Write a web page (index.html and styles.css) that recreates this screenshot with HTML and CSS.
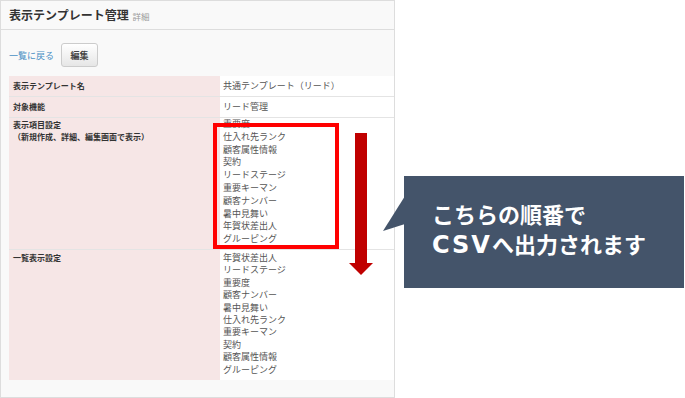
FILE: index.html
```html
<!DOCTYPE HTML>
<html lang="ja">
  <head>
    <title>表示テンプレート管理</title>
    <meta charset="utf-8">
    <link rel="stylesheet" href="styles.css">
  </head>
  <body>

  <div id="panel">
    <div class="panel-head">
      <h1>表示テンプレート管理 <small>詳細</small></h1>
    </div>

    <div class="actions">
      <a href="#">一覧に戻る</a>
      <button type="button">編集</button>
    </div>

    <table class="detail">
      <tr class="row-short">
        <th>表示テンプレート名</th>
        <td>共通テンプレート（リード）</td>
      </tr>
      <tr class="row-short">
        <th>対象機能</th>
        <td>リード管理</td>
      </tr>
      <tr class="row-list first">
        <th>表示項目設定<br>（新規作成、詳細、編集画面で表示）</th>
        <td>
          重要度<br>
          仕入れ先ランク<br>
          顧客属性情報<br>
          契約<br>
          リードステージ<br>
          重要キーマン<br>
          顧客ナンバー<br>
          暑中見舞い<br>
          年賀状差出人<br>
          グルーピング
        </td>
      </tr>
      <tr class="row-list">
        <th>一覧表示設定</th>
        <td>
          年賀状差出人<br>
          リードステージ<br>
          重要度<br>
          顧客ナンバー<br>
          暑中見舞い<br>
          仕入れ先ランク<br>
          重要キーマン<br>
          契約<br>
          顧客属性情報<br>
          グルーピング
        </td>
      </tr>
    </table>
  </div>

  <div id="markbox"></div>

  <svg id="arrow" width="24" height="142" viewBox="0 0 24 142">
    <rect x="6" y="0" width="12" height="131" fill="#c00000"/>
    <polygon points="0,130 24,130 12,142" fill="#c00000"/>
  </svg>

  <div id="callout">
    <svg class="tail" width="22" height="36" viewBox="0 0 22 36">
      <polygon points="22,0 0,35 22,28" fill="#44546a"/>
    </svg>
    <p>こちらの順番で<br><span class="latin">CSV</span>へ出力されます</p>
  </div>

  </body>
</html>
```

FILE: styles.css
```css
html {
  height: 100%;
}
body {
  margin: 0;
  padding: 0;
  background: #ffffff;
  color: #555555;
  font-family: "Noto Sans CJK JP", "Noto Sans", sans-serif;
  font-size: 9px;
  height: 100%;
}

#panel {
  width: 395px;
  height: 398px;
  box-sizing: border-box;
  background-color: #f9f9f9;
  border: 1px solid #dddddd;
}

.panel-head {
  height: 28px;
  border-bottom: 1px solid #dddddd;
  padding: 0 8px;
  display: flex;
  align-items: center;
}

h1 {
  margin: 0;
  font-size: 12px;
  font-weight: bold;
  color: #333333;
  line-height: 14px;
}
h1 small {
  font-size: 8.5px;
  font-weight: normal;
  color: #999999;
  margin-left: 1px;
}

.actions {
  display: flex;
  align-items: center;
  gap: 7px;
  padding: 13px 0 0 8px;
  height: 24px;
  margin-bottom: 9px;
}
.actions a {
  color: #4a8fc4;
  text-decoration: none;
  font-size: 9px;
}
.actions button {
  width: 37px;
  height: 24px;
  padding: 0;
  font-family: inherit;
  font-size: 9px;
  font-weight: bold;
  color: #444444;
  background: linear-gradient(#ffffff, #e6e6e6);
  border: 1px solid #cccccc;
  border-radius: 3px;
}

.detail {
  margin-left: 8px;
  width: calc(100% - 8px);
  border-collapse: collapse;
  background-color: #ffffff;
}
.detail th, .detail td {
  text-align: left;
  vertical-align: top;
  border-bottom: 1px solid #e4e4e4;
}
.detail th {
  width: 211px;
  box-sizing: border-box;
  background-color: #f6e6e6;
  color: #333333;
  font-size: 8px;
  font-weight: bold;
  line-height: 12px;
  padding: 4px 4px 3px 4px;
}
.detail td {
  padding: 4px 3px 3px 3px;
  font-size: 9px;
  line-height: 12px;
}
.row-short td {
  height: 13px;
}
.row-list th {
  padding-top: 2px;
}
.row-list td {
  padding-top: 2px;
  padding-bottom: 4px;
  line-height: 12.4px;
}
.row-list.first th {
  padding-top: 1px;
}
.row-list.first td {
  padding-top: 0;
  padding-bottom: 3px;
  line-height: 12.8px;
}
.detail tr:last-child th, .detail tr:last-child td {
  border-bottom: none;
}

#markbox {
  position: absolute;
  left: 213px;
  top: 123px;
  width: 118px;
  height: 118px;
  border: 4px solid #ff0000;
}

#arrow {
  position: absolute;
  left: 349px;
  top: 133px;
}

#callout {
  position: absolute;
  left: 404px;
  top: 176px;
  width: 280px;
  height: 112px;
  background-color: #44546a;
  display: flex;
  align-items: center;
}
#callout .tail {
  position: absolute;
  left: -21px;
  top: 20px;
}
#callout p {
  margin: 0 0 6px 28px;
  color: #ffffff;
  font-size: 22px;
  font-weight: bold;
  line-height: 30px;
}
#callout .latin {
  font-family: "DejaVu Sans", sans-serif;
  font-size: 24px;
  letter-spacing: 2px;
}
```
